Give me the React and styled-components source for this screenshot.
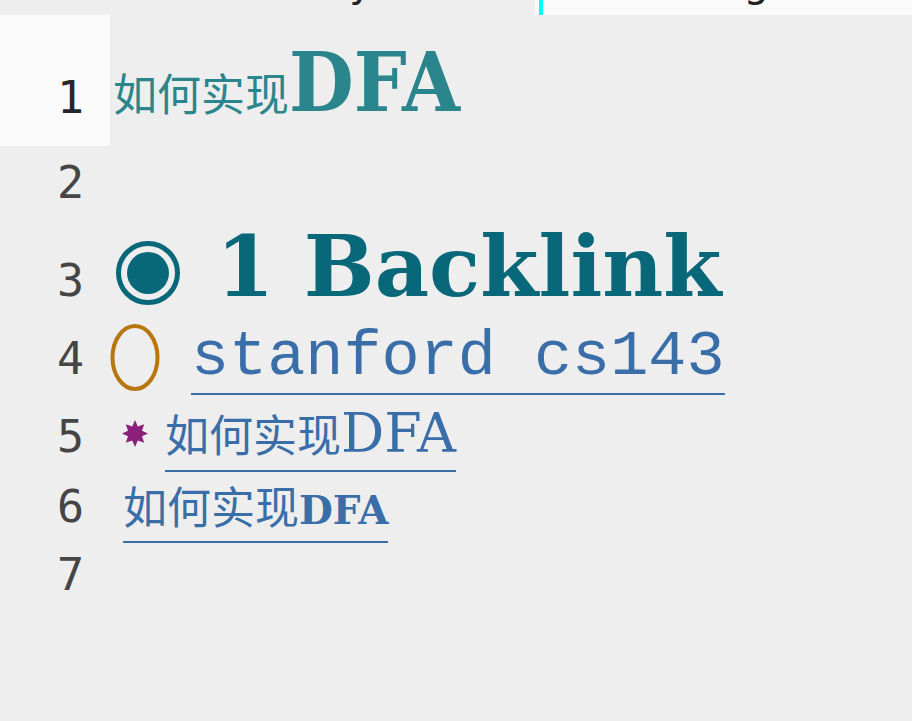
import React from 'react';
import styled, { createGlobalStyle } from 'styled-components';

const GlobalStyle = createGlobalStyle`
  html, body {
    margin: 0;
    padding: 0;
    background: #eeeeee;
  }
  body {
    width: 912px;
    height: 721px;
    overflow: hidden;
    font-family: "DejaVu Sans Mono", monospace;
  }
`;

const LINES = [
  { n: 1, h: 131, gutterPad: 60, pad: 26, active: true },
  { n: 2, h: 70, gutterPad: 14, pad: 0 },
  { n: 3, h: 92, gutterPad: 42, pad: 9 },
  { n: 4, h: 92, gutterPad: 28, pad: 18 },
  { n: 5, h: 70, gutterPad: 14, pad: 7 },
  { n: 6, h: 72, gutterPad: 14, pad: 13 },
  { n: 7, h: 70, gutterPad: 10, pad: 0 },
];

function App() {
  return (
    <>
      <GlobalStyle />
      <Page>
        <TabBar>
          <Tab>
            <TabLabel $ml={200}>Glossary</TabLabel>
          </Tab>
          <Tab $current>
            <TabLabel $ml={82}>Linking</TabLabel>
          </Tab>
        </TabBar>

        <Editor>
          {LINES.map((line) => (
            <Row key={line.n} $h={line.h}>
              <Gutter $active={line.active} $pad={line.gutterPad}>
                {line.n}
              </Gutter>
              <Content $pad={line.pad}>{renderLine(line.n)}</Content>
            </Row>
          ))}
        </Editor>
      </Page>
    </>
  );

  function renderLine(n) {
    switch (n) {
      case 1:
        return (
          <>
            <Cjk $color="#2a868c" $ml={3}>如何实现</Cjk>
            <TitleDfa>DFA</TitleDfa>
          </>
        );
      case 3:
        return (
          <>
            <Marker $mt={16} $ml={6}>
              <svg width="64" height="64" viewBox="0 0 64 64">
                <circle cx="32" cy="32" r="29.5" fill="none" stroke="#08687a" strokeWidth="5" />
                <circle cx="32" cy="32" r="21" fill="#08687a" />
              </svg>
            </Marker>
            <Heading>1 Backlink</Heading>
          </>
        );
      case 4:
        return (
          <>
            <Marker $mt={-2} $ml={0}>
              <svg width="50" height="67" viewBox="0 0 50 67">
                <ellipse cx="25" cy="33.5" rx="22.5" ry="31.5" fill="none" stroke="#b8760f" strokeWidth="4" />
              </svg>
            </Marker>
            <Link $ml={31} $pb={3}>
              <MonoText>stanford cs143</MonoText>
            </Link>
          </>
        );
      case 5:
        return (
          <>
            <Marker $mt={13} $ml={12}>
              <svg width="26" height="27" viewBox="0 0 26 27">
                <polygon
                  fill="#8b1f7a"
                  points="13,0 15.8,6.5 22.2,4.3 20,10.7 26,13.5 20,16.3 22.2,22.7 15.8,20.5 13,27 10.2,20.5 3.8,22.7 6,16.3 0,13.5 6,10.7 3.8,4.3 10.2,6.5"
                />
              </svg>
            </Marker>
            <Link $ml={17} $pb={9}>
              <Cjk $color="#3a6ea8">如何实现</Cjk>
              <SerifText>DFA</SerifText>
            </Link>
          </>
        );
      case 6:
        return (
          <Link $ml={13} $pb={11}>
            <Cjk $color="#3a6ea8">如何实现</Cjk>
            <BoldSerifText>DFA</BoldSerifText>
          </Link>
        );
      default:
        return null;
    }
  }
}

// styles

const Page = styled.div`
  width: 912px;
  height: 721px;
  background: #eeeeee;
  overflow: hidden;
  display: flex;
  flex-direction: column;
`;

const TabBar = styled.div`
  height: 15px;
  display: grid;
  grid-template-columns: 535px 1fr;
  overflow: hidden;
`;

const Tab = styled.div`
  background: ${({ $current }) => ($current ? '#fafafa' : '#eeeeee')};
  border-left: ${({ $current }) => ($current ? '4px solid #00ffff' : 'none')};
  margin-left: ${({ $current }) => ($current ? '4px' : '0')};
  box-shadow: ${({ $current }) => ($current ? '-4px 0 0 #fafafa' : 'none')};
  overflow: hidden;
  display: flex;
  align-items: flex-end;
`;

const TabLabel = styled.span`
  font-family: "DejaVu Sans", sans-serif;
  font-size: 40px;
  line-height: 1;
  color: #222;
  margin-left: ${({ $ml }) => $ml}px;
  margin-bottom: 13px;
  white-space: nowrap;
`;

const Editor = styled.div`
  display: flex;
  flex-direction: column;
`;

const Row = styled.div`
  height: ${({ $h }) => $h}px;
  display: grid;
  grid-template-columns: 110px 1fr;
`;

const Gutter = styled.div`
  background: ${({ $active }) => ($active ? '#fafafa' : 'transparent')};
  color: ${({ $active }) => ($active ? '#262626' : '#454545')};
  font-family: "DejaVu Sans Mono", monospace;
  font-size: 45px;
  line-height: 1;
  text-align: right;
  padding-top: ${({ $pad }) => $pad}px;
  padding-right: 26px;
  box-sizing: border-box;
`;

const Content = styled.div`
  display: flex;
  align-items: baseline;
  padding-top: ${({ $pad }) => $pad}px;
  white-space: nowrap;
`;

const Marker = styled.span`
  align-self: flex-start;
  display: block;
  margin-top: ${({ $mt }) => $mt}px;
  margin-left: ${({ $ml }) => $ml}px;
  line-height: 0;

  svg {
    display: block;
  }
`;

const Cjk = styled.span`
  font-family: "Noto Sans CJK SC", sans-serif;
  font-size: 44px;
  line-height: 1;
  color: ${({ $color }) => $color};
  margin-left: ${({ $ml }) => $ml || 0}px;
`;

const TitleDfa = styled.span`
  font-family: "DejaVu Serif", serif;
  font-stretch: condensed;
  font-weight: bold;
  font-size: 83px;
  line-height: 1;
  color: #2a868c;
`;

const Heading = styled.span`
  font-family: "DejaVu Serif", serif;
  font-weight: bold;
  font-size: 84px;
  line-height: 1;
  color: #08687a;
  margin-left: 36px;
`;

const Link = styled.span`
  display: inline-flex;
  align-items: baseline;
  margin-left: ${({ $ml }) => $ml}px;
  padding-bottom: ${({ $pb }) => $pb}px;
  border-bottom: 2px solid #3a6ea8;
`;

const MonoText = styled.span`
  font-family: "Liberation Mono", monospace;
  font-size: 63.5px;
  line-height: 1;
  color: #3a6ea8;
`;

const SerifText = styled.span`
  font-family: "DejaVu Serif", serif;
  font-size: 54px;
  line-height: 1;
  color: #3a6ea8;
`;

const BoldSerifText = styled.span`
  font-family: "DejaVu Serif", serif;
  font-weight: bold;
  font-size: 39px;
  line-height: 1;
  color: #3a6ea8;
`;

export default App;
